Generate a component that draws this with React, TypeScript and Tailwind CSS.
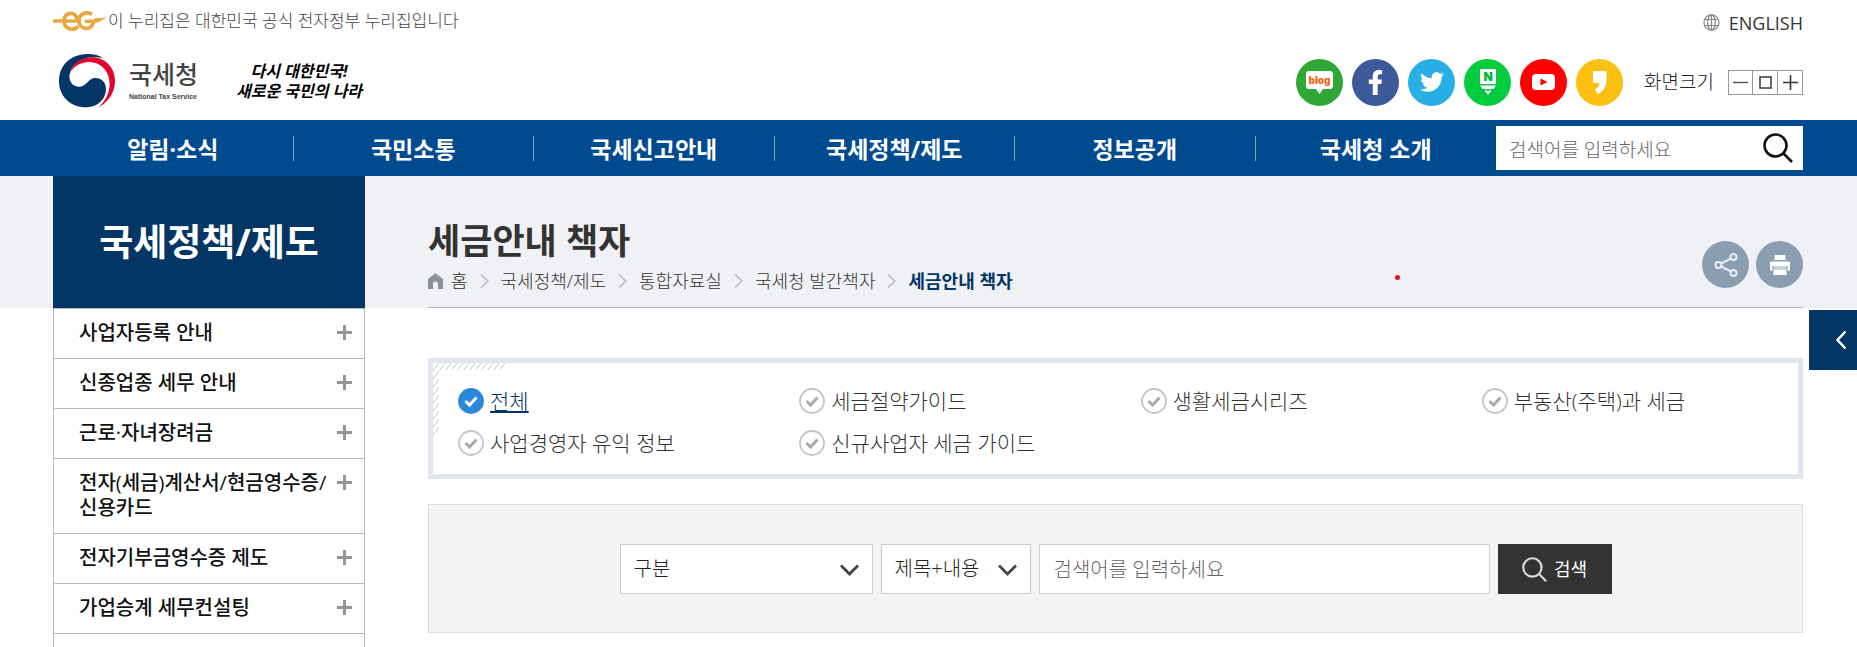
import { useState } from 'react';
import type { ReactNode } from 'react';
import { FaFacebookF, FaTwitter } from 'react-icons/fa';

const navItems = ['알림·소식', '국민소통', '국세신고안내', '국세정책/제도', '정보공개', '국세청 소개'];

const sideItems = [
  '사업자등록 안내',
  '신종업종 세무 안내',
  '근로·자녀장려금',
  '전자(세금)계산서/현금영수증/신용카드',
  '전자기부금영수증 제도',
  '가업승계 세무컨설팅',
];

const crumbs = ['홈', '국세정책/제도', '통합자료실', '국세청 발간책자'];

const categories = [
  '전체',
  '세금절약가이드',
  '생활세금시리즈',
  '부동산(주택)과 세금',
  '사업경영자 유익 정보',
  '신규사업자 세금 가이드',
];

function EgLogo() {
  return (
    <svg width="54" height="20" viewBox="0 0 54 20" fill="none" stroke="#e8a840" aria-hidden="true">
      <path d="M0 10 H25" strokeWidth="3.4" />
      <path d="M24 10 C25 0 11 0 11 9.5 C11 19 21 20 25 15.5" strokeWidth="3.8" />
      <path d="M39 3.5 C34 0 26 2 26 10 C26 19 39 20 40 11.5" strokeWidth="3.8" />
      <path d="M32 10.5 L41 10 L47 8.5" strokeWidth="3.4" />
      <path d="M41 7.5 L54 6.5 L42 12.5Z" fill="#e8a840" stroke="none" />
    </svg>
  );
}

function Taegeuk() {
  return (
    <svg width="56" height="56" viewBox="0 0 168 166" aria-hidden="true">
      <path
        fill="#033665"
        d="M132 14 C112 0 70 -4 38 14 C10 30 0 58 0 84 C0 130 36 164 84 162 C115 160 140 140 141 107 C141 85 125 72 106 74 C88 76 84 98 62 100 C40 101 28 82 32 62 C37 32 70 12 100 12 C112 11 124 13 132 14Z"
      />
      <path
        fill="#e4032e"
        d="M32 62 C38 32 66 12 98 12 C140 12 168 44 168 84 C168 120 146 148 116 164 C138 146 152 120 152 92 C152 58 130 28 92 26 C62 26 40 42 32 62Z"
      />
    </svg>
  );
}

function Magnifier({ size, color }: { size: number; color: string }) {
  return (
    <svg width={size} height={size} viewBox="0 0 30 30" fill="none" stroke={color} strokeWidth="2.6" aria-hidden="true">
      <circle cx="12.5" cy="12.5" r="11" />
      <path d="M20.5 20.5 L29 29" />
    </svg>
  );
}

function Sns({ label, color, children }: { label: string; color: string; children: ReactNode }) {
  return (
    <a href="#" aria-label={label} className={`flex size-[47px] items-center justify-center rounded-full text-white ${color}`}>
      {children}
    </a>
  );
}

function ChevronDown() {
  return (
    <svg
      className="pointer-events-none absolute top-5 right-[14px]"
      width="19"
      height="12"
      viewBox="0 0 19 12"
      fill="none"
      stroke="#444"
      strokeWidth="2.8"
      aria-hidden="true"
    >
      <path d="M1 1.5 L9.5 10 L18 1.5" />
    </svg>
  );
}

function CheckMark({ active }: { active: boolean }) {
  return (
    <svg width="26" height="26" viewBox="0 0 26 26" fill="none" aria-hidden="true">
      <circle cx="13" cy="13" r="12" fill={active ? '#2b88d9' : '#fff'} stroke={active ? '#2b88d9' : '#c4c4c4'} strokeWidth="1.8" />
      <path d="M7.5 13 L11.5 17 L18.5 9.5" stroke={active ? '#fff' : '#aaa'} strokeWidth="3" />
    </svg>
  );
}

function Header() {
  return (
    <header className="pr-[54px] pl-[53px]">
      <div className="flex h-10 items-center justify-between">
        <p className="flex items-center gap-px pt-[2px] text-[17px] font-light text-[#444]">
          <EgLogo />이 누리집은 대한민국 공식 전자정부 누리집입니다
        </p>
        <a href="#" className="flex items-center gap-[9px] pt-[5px] text-lg text-[#333]">
          <svg width="17" height="17" viewBox="0 0 17 17" fill="none" stroke="#888" strokeWidth="1.2" aria-hidden="true">
            <circle cx="8.5" cy="8.5" r="7.6" />
            <ellipse cx="8.5" cy="8.5" rx="3.8" ry="7.6" />
            <path d="M8.5 1 V16 M1.5 5.5 H15.5 M1.5 11.5 H15.5" />
          </svg>
          ENGLISH
        </a>
      </div>

      <div className="flex h-20 items-center justify-between">
        <div className="flex items-center pt-[2px]">
          <a href="#" className="flex items-center gap-[14px] pl-[6px]">
            <Taegeuk />
            <span className="flex flex-col gap-1 text-[#444]">
              <span className="text-[25px] leading-[28px] font-medium">국세청</span>
              <span className="font-['Liberation_Sans',sans-serif] text-[7px] leading-[10px] font-bold">National Tax Service</span>
            </span>
          </a>
          <p className="ml-[38px] flex flex-col text-center text-base leading-5 font-bold text-black italic">
            <span>다시 대한민국!</span>
            <span>새로운 국민의 나라</span>
          </p>
        </div>

        <div className="flex items-center pt-1">
          <div className="flex gap-[9px]">
            <Sns label="블로그" color="bg-[#2fa836]">
              <svg width="29" height="25" viewBox="0 0 29 25">
                <path fill="#fff" d="M4 1 H25 Q28 1 28 4 V16 Q28 19 25 19 H18 L14.5 24 L11 19 H4 Q1 19 1 16 V4 Q1 1 4 1Z" />
                <text x="14.5" y="13.5" textAnchor="middle" fontSize="10" fontWeight="900" fill="#f06a1e" fontFamily="Inter">
                  blog
                </text>
              </svg>
            </Sns>
            <Sns label="페이스북" color="bg-[#3c5a99]">
              <FaFacebookF size={25} />
            </Sns>
            <Sns label="트위터" color="bg-[#29aee6]">
              <FaTwitter size={24} />
            </Sns>
            <Sns label="네이버 포스트" color="bg-[#03cc3f]">
              <svg width="18" height="26" viewBox="0 0 18 26">
                <path fill="#fff" d="M1 0 H17 V15 H1Z M1 16.5 H17 L14.5 20 H3.5Z M5.5 21.5 H12.5 L9 26Z" />
                <text x="9" y="12" textAnchor="middle" fontSize="12" fontWeight="900" fill="#03b83a" fontFamily="Inter">
                  N
                </text>
              </svg>
            </Sns>
            <Sns label="유튜브" color="bg-[#ff0000]">
              <svg width="23" height="16" viewBox="0 0 23 16">
                <rect width="23" height="16" rx="4" fill="#fff" />
                <path d="M8.5 4.5 L15.5 8 L8.5 11.5Z" fill="#f00" />
              </svg>
            </Sns>
            <Sns label="카카오스토리" color="bg-[#fcc012]">
              <svg width="14" height="23" viewBox="0 0 14 23">
                <path fill="#fff" d="M1 0 H12.5 Q13.5 0 13.5 1 V9 C13.5 16 10 20.5 5 23 L1.5 18.5 C4.5 17 6.5 14.5 6.5 12 H1 Q0 12 0 11 V1 Q0 0 1 0Z" />
              </svg>
            </Sns>
          </div>
          <span className="ml-[21px] text-[19px] font-light text-[#222]">화면크기</span>
          <div className="ml-[14px] flex h-[25px] divide-x divide-[#999] border border-[#999]">
            <button type="button" aria-label="화면 축소" className="flex w-6 items-center justify-center">
              <svg width="15" height="15" stroke="#555" strokeWidth="1.4">
                <path d="M0 7.5 H15" />
              </svg>
            </button>
            <button type="button" aria-label="기본 크기" className="flex w-[25px] items-center justify-center">
              <svg width="13" height="13" fill="none" stroke="#444" strokeWidth="1.6">
                <rect x="1" y="1" width="11" height="11" />
              </svg>
            </button>
            <button type="button" aria-label="화면 확대" className="flex w-6 items-center justify-center">
              <svg width="15" height="15" stroke="#333" strokeWidth="1.6">
                <path d="M0 7.5 H15 M7.5 0 V15" />
              </svg>
            </button>
          </div>
        </div>
      </div>
    </header>
  );
}

function NavBar() {
  return (
    <div className="flex h-14 items-center bg-[#004b8f] pr-[54px] pl-[53px]">
      <nav className="flex-1">
        <ul className="grid grid-cols-6">
          {navItems.map((item) => (
            <li key={item} className="h-[25px] border-r border-[#80a5c7] text-center leading-[27px] last:border-r-0">
              <a href="#" className="text-[23px] font-bold text-white">
                {item}
              </a>
            </li>
          ))}
        </ul>
      </nav>
      <form className="flex h-11 w-[307px] items-center bg-white pr-[10px] pl-[13px]" onSubmit={(e) => e.preventDefault()}>
        <input
          type="text"
          aria-label="통합검색"
          placeholder="검색어를 입력하세요"
          className="min-w-0 flex-1 pt-1 text-[19px] font-light outline-none placeholder:text-[#666]"
        />
        <button type="submit" aria-label="검색">
          <Magnifier size={30} color="#111" />
        </button>
      </form>
    </div>
  );
}

function TitleBand() {
  return (
    <div className="flex h-[132px] bg-[#eff1f5] pr-[54px] pl-[53px]">
      <h2 className="flex w-[312px] items-center justify-center bg-[#033665] text-[37px] font-bold text-white">국세정책/제도</h2>
      <div className="relative ml-[63px] flex flex-1 items-end justify-between border-b border-[#adb5c2]">
        <div className="pb-[10px]">
          <h1 className="text-[35px] leading-[48px] font-bold text-[#333]">세금안내 책자</h1>
          <nav aria-label="현재 위치">
            <ol className="flex items-center text-lg leading-8 font-light text-[#333]">
              <li className="mr-2">
                <svg width="15" height="16" viewBox="0 0 15 16" aria-hidden="true">
                  <path fill="#8b929a" d="M7.5 0 L15 6 V16 H10 V11 Q10 8.5 7.5 8.5 Q5 8.5 5 11 V16 H0 V6Z" />
                </svg>
              </li>
              {crumbs.map((crumb) => (
                <li key={crumb} className="flex items-center">
                  <a href="#">{crumb}</a>
                  <svg className="mx-3" width="9" height="14" viewBox="0 0 9 14" fill="none" stroke="#b5b9c0" strokeWidth="1.5" aria-hidden="true">
                    <path d="M1 0.5 L8 7 L1 13.5" />
                  </svg>
                </li>
              ))}
              <li className="font-bold text-[#033665]">세금안내 책자</li>
            </ol>
          </nav>
        </div>
        <span className="absolute right-[403px] bottom-[27px] size-[5px] rounded-full bg-[#e8141e]" />
        <div className="flex gap-[7px] pb-[19px]">
          <button type="button" aria-label="공유" className="flex size-[47px] items-center justify-center rounded-full bg-[#8b9eb1]">
            <svg width="24" height="24" viewBox="0 0 24 24" fill="none" stroke="#e9edf1" strokeWidth="2">
              <circle cx="4.5" cy="12" r="3" />
              <circle cx="19.5" cy="4" r="3" />
              <circle cx="19.5" cy="20" r="3" />
              <path d="M7 10.5 L17 5.5 M7 13.5 L17 18.5" />
            </svg>
          </button>
          <button type="button" aria-label="인쇄" className="flex size-[47px] items-center justify-center rounded-full bg-[#8b9eb1]">
            <svg width="20" height="20" viewBox="0 0 20 20">
              <path fill="#fff" d="M4.5 0 H15.5 V5 H4.5Z M1.5 6.5 H18.5 Q20 6.5 20 8 V15.5 H17.5 V11 H2.5 V15.5 H0 V8 Q0 6.5 1.5 6.5Z" />
              <path fill="#c9d2db" d="M3.5 11 H16.5 V15 H3.5Z" />
              <path fill="#fff" d="M3.5 15 H16.5 V20 H3.5Z" />
            </svg>
          </button>
        </div>
      </div>
    </div>
  );
}

function SideMenu() {
  return (
    <aside className="w-[312px] border-x border-[#b8b8b8]">
      <ul className="border-t border-[#b8b8b8]">
        {sideItems.map((item) => (
          <li key={item} className="flex items-start justify-between border-b border-[#b8b8b8] pt-[11px] pr-3 pb-[13px] pl-[25px]">
            <a href="#" className="w-[254px] text-xl leading-[25px] font-medium text-[#111]">
              {item}
            </a>
            <svg className="mt-[5px]" width="15" height="15" stroke="#959595" strokeWidth="3" aria-hidden="true">
              <path d="M0 7.5 H15 M7.5 0 V15" />
            </svg>
          </li>
        ))}
      </ul>
    </aside>
  );
}

function CategoryBox() {
  const [active, setActive] = useState('전체');

  return (
    <div className="relative border-[5px] border-[#dfe6ee] pt-[17px] pb-[10px]">
      <svg className="absolute top-0 left-0" width="75" height="75" aria-hidden="true">
        <defs>
          <pattern id="hatch" width="6" height="8" patternUnits="userSpaceOnUse">
            <path d="M-1 9.33 L7 -1.33 M-4 5.33 L1 -1.33 M5 9.33 L10 2.67" stroke="#bcc5d1" strokeWidth="1" />
          </pattern>
        </defs>
        <path d="M0 0 H75 L70 7 H6 V68 L0 75Z" fill="url(#hatch)" />
      </svg>
      <ul className="grid grid-cols-4">
        {categories.map((name) => (
          <li key={name} className="flex h-[42px] items-center pl-[25px] text-[21px] leading-[26px] font-light">
            <a
              href="#"
              onClick={() => setActive(name)}
              className={name === active ? 'flex items-center gap-[6px] text-[#033665]' : 'flex items-center gap-[6px] text-[#333]'}
            >
              <CheckMark active={name === active} />
              <span className={name === active ? 'underline decoration-2 underline-offset-2' : ''}>{name}</span>
            </a>
          </li>
        ))}
      </ul>
    </div>
  );
}

function SearchForm() {
  return (
    <form
      className="mt-[25px] flex justify-center gap-2 border border-[#ddd] bg-[#f4f4f4] pt-[39px] pb-[38px] text-xl font-light text-[#222]"
      onSubmit={(e) => e.preventDefault()}
    >
      <div className="relative">
        <select aria-label="구분" className="h-[50px] w-[253px] appearance-none border border-[#ccc] bg-white pl-[13px] outline-none">
          <option>구분</option>
        </select>
        <ChevronDown />
      </div>
      <div className="relative">
        <select aria-label="검색 조건" className="h-[50px] w-[150px] appearance-none border border-[#ccc] bg-white pl-[13px] outline-none">
          <option>제목+내용</option>
        </select>
        <ChevronDown />
      </div>
      <input
        type="text"
        aria-label="검색어"
        placeholder="검색어를 입력하세요"
        className="h-[50px] w-[451px] border border-[#ccc] bg-white px-[14px] outline-none placeholder:text-[#666]"
      />
      <button type="submit" className="flex h-[50px] w-[114px] items-center justify-center gap-[7px] bg-[#333] text-lg font-normal text-white">
        <Magnifier size={25} color="#ddd" />
        검색
      </button>
    </form>
  );
}

export default function App() {
  return (
    <div className="relative flex min-h-screen flex-col bg-white font-['Open_Sans','Noto_Sans_CJK_KR',sans-serif]">
      <Header />
      <NavBar />
      <TitleBand />
      <div className="flex flex-1 pr-[54px] pl-[53px]">
        <SideMenu />
        <main className="ml-[63px] flex-1 pt-[50px]">
          <CategoryBox />
          <SearchForm />
        </main>
      </div>
      <button
        type="button"
        aria-label="퀵메뉴 열기"
        className="absolute top-[310px] right-0 flex h-[60px] w-12 items-center justify-end bg-[#033665] pr-[11px]"
      >
        <svg width="10" height="18" viewBox="0 0 10 18" fill="none" stroke="#fff" strokeWidth="2.4" aria-hidden="true">
          <path d="M9.5 0.5 L1.5 9 L9.5 17.5" />
        </svg>
      </button>
    </div>
  );
}
